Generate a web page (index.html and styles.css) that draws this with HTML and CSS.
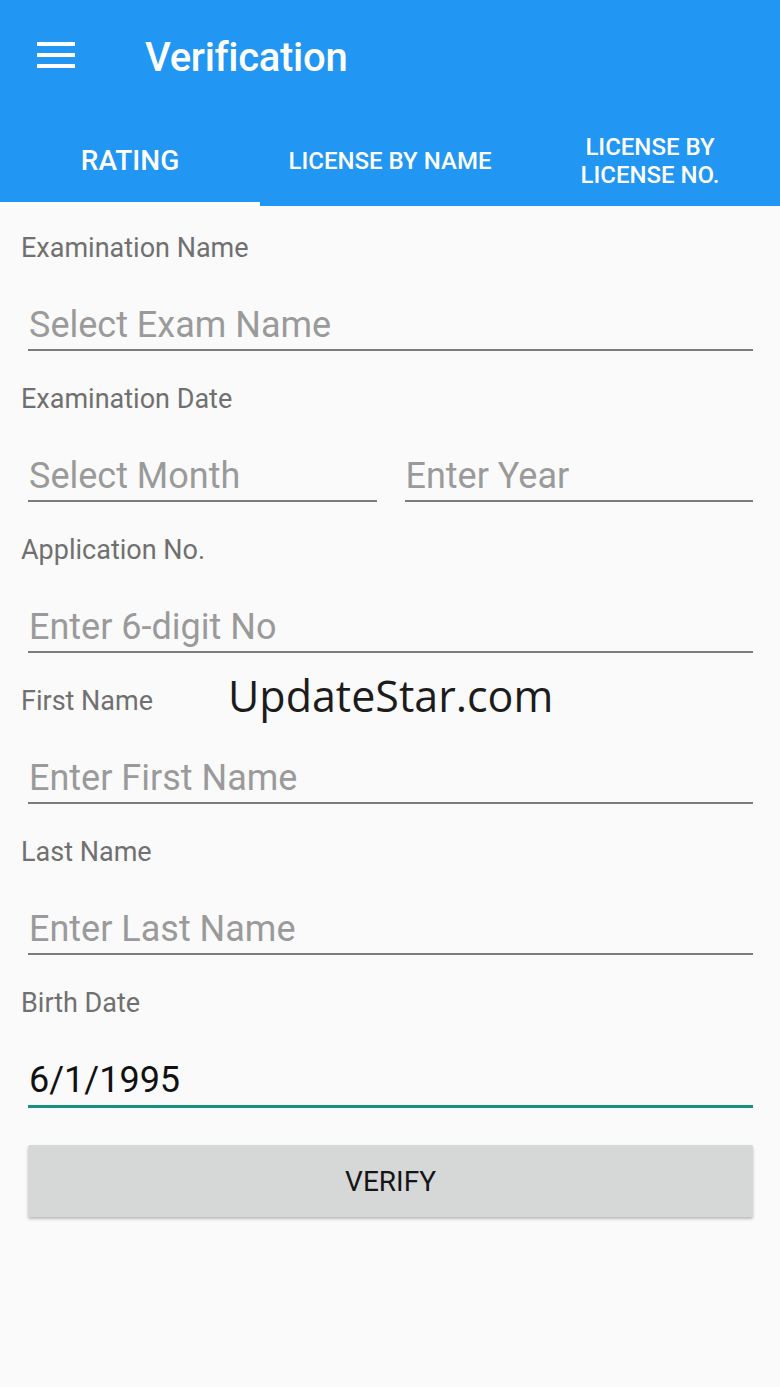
FILE: index.html
```html
<!DOCTYPE html>
<html lang="en">
  <head>
    <meta charset="UTF-8" />
    <meta name="viewport" content="width=device-width, initial-scale=1.0" />
    <title>Verification</title>
    <link rel="stylesheet" href="styles.css">
  </head>
  <body>
    <header class="appbar">
      <div class="toolbar">
        <svg class="menu" width="38" height="26" viewBox="0 0 38 26">
          <rect x="0" y="0" width="38" height="4" fill="#fff" />
          <rect x="0" y="11" width="38" height="4" fill="#fff" />
          <rect x="0" y="22" width="38" height="4" fill="#fff" />
        </svg>
        <h1 class="title">Verification</h1>
      </div>
      <nav class="tabs">
        <div class="tab ativo">RATING</div>
        <div class="tab">LICENSE BY NAME</div>
        <div class="tab duas">LICENSE BY<br>LICENSE NO.</div>
      </nav>
    </header>

    <main class="form">
      <div class="campo">
        <div class="label">Examination Name</div>
        <div class="input vazio">Select Exam Name</div>
      </div>
      <div class="campo">
        <div class="label">Examination Date</div>
        <div class="linha">
          <div class="input vazio">Select Month</div>
          <div class="input vazio">Enter Year</div>
        </div>
      </div>
      <div class="campo">
        <div class="label">Application No.</div>
        <div class="input vazio">Enter 6-digit No</div>
      </div>
      <div class="campo">
        <div class="label">First Name</div>
        <div class="input vazio">Enter First Name</div>
      </div>
      <div class="campo">
        <div class="label">Last Name</div>
        <div class="input vazio">Enter Last Name</div>
      </div>
      <div class="campo">
        <div class="label">Birth Date</div>
        <div class="input focado">6/1/1995</div>
      </div>
      <button class="verificar">VERIFY</button>
    </main>

    <div class="marca">UpdateStar.com</div>
  </body>
</html>
```

FILE: styles.css
```css
body {
  margin: 0;
  background: #fafafa;
  font-family: Roboto, "Liberation Sans", sans-serif;
  position: relative;
  height: 1387px;
  overflow: hidden;
}
.appbar {
  background: #2196f3;
  color: white;
}
.toolbar {
  height: 112px;
  display: flex;
  align-items: center;
  padding-left: 37px;
}
.menu {
  display: block;
  margin-top: -3px;
}
.title {
  margin: 2px 0 0 70px;
  font-size: 40px;
  font-weight: 500;
  letter-spacing: -0.3px;
}
.tabs {
  display: grid;
  grid-template-columns: repeat(3, 1fr);
  height: 94px;
}
.tab {
  display: flex;
  align-items: center;
  justify-content: center;
  text-align: center;
  font-size: 24px;
  font-weight: 500;
  line-height: 28px;
  border-bottom: 4px solid transparent;
  padding-top: 8px;
}
.tab.ativo {
  font-size: 28px;
  border-bottom-color: white;
}
.form {
  padding: 26px 27px 0 0;
}
.campo {
  margin-bottom: 32px;
}
.label {
  padding-left: 21px;
  font-size: 27px;
  line-height: 32px;
  color: #707070;
}
.input {
  margin: 37px 0 0 28px;
  font-size: 36px;
  line-height: 48px;
  border-bottom: 2px solid #7c7c7c;
  padding-left: 1px;
}
.input.vazio {
  color: #9a9a9a;
}
.input.focado {
  color: #111;
  border-bottom: 3px solid #17907f;
  line-height: 50px;
  margin-top: 36px;
}
.linha {
  display: grid;
  grid-template-columns: 1fr 1fr;
}
.linha .input + .input {
  margin-left: 28px;
}
.verificar {
  display: block;
  margin: 37px 0 0 28px;
  width: calc(100% - 28px);
  height: 72px;
  border: none;
  border-radius: 2px;
  background: #d6d7d7;
  box-shadow: 0 2px 3px rgba(0, 0, 0, 0.25);
  font-family: Roboto, "Liberation Sans", sans-serif;
  font-size: 28px;
  color: #151515;
}
.marca {
  position: absolute;
  left: 228px;
  top: 670px;
  font-family: "Open Sans", "DejaVu Sans", sans-serif;
  font-size: 43px;
  line-height: 52px;
  color: #1c1c1c;
}
```
